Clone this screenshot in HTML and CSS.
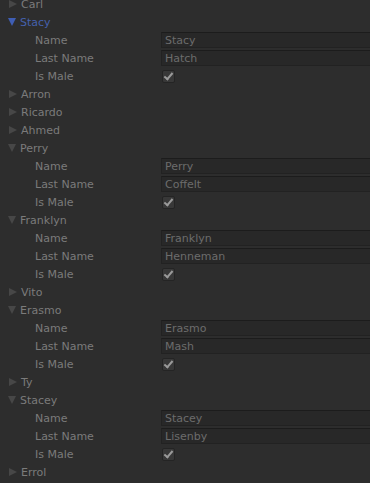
FILE: index.html
```html
<!DOCTYPE html>
<html lang="en">
<head>
  <meta charset="UTF-8">
  <title>Inspector</title>
  <link rel="stylesheet" href="styles.css">
</head>
<body>
  <div class="tree">
    <div class="row"><span class="arrow"></span>Carl</div>

    <div class="row open selected"><span class="arrow"></span>Stacy</div>
    <div class="field"><span class="label">Name</span><span class="input">Stacy</span></div>
    <div class="field"><span class="label">Last Name</span><span class="input">Hatch</span></div>
    <div class="field"><span class="label">Is Male</span><span class="check"></span></div>

    <div class="row"><span class="arrow"></span>Arron</div>
    <div class="row"><span class="arrow"></span>Ricardo</div>
    <div class="row"><span class="arrow"></span>Ahmed</div>

    <div class="row open"><span class="arrow"></span>Perry</div>
    <div class="field"><span class="label">Name</span><span class="input">Perry</span></div>
    <div class="field"><span class="label">Last Name</span><span class="input">Coffelt</span></div>
    <div class="field"><span class="label">Is Male</span><span class="check"></span></div>

    <div class="row open"><span class="arrow"></span>Franklyn</div>
    <div class="field"><span class="label">Name</span><span class="input">Franklyn</span></div>
    <div class="field"><span class="label">Last Name</span><span class="input">Henneman</span></div>
    <div class="field"><span class="label">Is Male</span><span class="check"></span></div>

    <div class="row"><span class="arrow"></span>Vito</div>

    <div class="row open"><span class="arrow"></span>Erasmo</div>
    <div class="field"><span class="label">Name</span><span class="input">Erasmo</span></div>
    <div class="field"><span class="label">Last Name</span><span class="input">Mash</span></div>
    <div class="field"><span class="label">Is Male</span><span class="check"></span></div>

    <div class="row"><span class="arrow"></span>Ty</div>

    <div class="row open"><span class="arrow"></span>Stacey</div>
    <div class="field"><span class="label">Name</span><span class="input">Stacey</span></div>
    <div class="field"><span class="label">Last Name</span><span class="input">Lisenby</span></div>
    <div class="field"><span class="label">Is Male</span><span class="check"></span></div>

    <div class="row"><span class="arrow"></span>Errol</div>
  </div>
</body>
</html>
```

FILE: styles.css
```css
html, body {
  margin: 0;
  background: #2d2d2d;
  overflow: hidden;
}
body {
  font-family: "DejaVu Sans", Verdana, sans-serif;
  font-size: 11px;
  color: #7b7b7b;
}
.tree {
  margin-top: -4px;
}
.row, .field {
  display: flex;
  align-items: center;
  height: 16px;
  margin-bottom: 2px;
  white-space: nowrap;
}
.row {
  padding-left: 9px;
}
.arrow {
  width: 0;
  height: 0;
  margin-right: 4px;
  border-top: 4.5px solid transparent;
  border-bottom: 4.5px solid transparent;
  border-left: 8px solid #474747;
}
.open .arrow {
  margin-left: -1px;
  margin-right: 4px;
  border-left: 4.5px solid transparent;
  border-right: 4.5px solid transparent;
  border-top: 8px solid #474747;
  border-bottom: 0;
}
.selected {
  color: #4461ad;
}
.selected .arrow {
  border-top-color: #3f5eb4;
}
.label {
  width: 126px;
  padding-left: 35px;
  flex-shrink: 0;
}
.input {
  flex: 1;
  height: 14px;
  line-height: 15px;
  padding-left: 3px;
  background: #282828;
  border: 1px solid #222;
  border-top-color: #1c1c1c;
  border-right: 0;
  color: #6c6c6c;
}
.check {
  width: 11px;
  height: 11px;
  margin-left: 1px;
  background: #383838;
  border: 1px solid #242424;
  border-radius: 2px;
  position: relative;
}
.check::after {
  content: "";
  position: absolute;
  left: 3px;
  top: 0px;
  width: 3px;
  height: 7px;
  border-right: 2px solid #9a9a9a;
  border-bottom: 2px solid #9a9a9a;
  transform: rotate(40deg);
}
```
